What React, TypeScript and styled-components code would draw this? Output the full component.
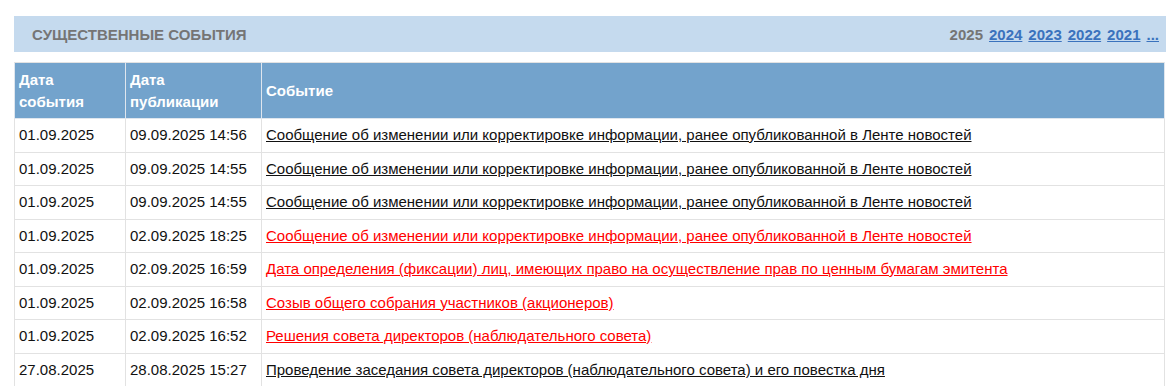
import React from 'react';
import styled, { createGlobalStyle } from 'styled-components';

const GlobalStyle = createGlobalStyle`
  body {
    margin: 0;
    background: #fff;
    font-family: "Liberation Sans", Arial, sans-serif;
  }
`;

type Row = {
  date: string;
  published: string;
  title: string;
  fresh?: boolean;
};

const rows: Row[] = [
  { date: '01.09.2025', published: '09.09.2025 14:56', title: 'Сообщение об изменении или корректировке информации, ранее опубликованной в Ленте новостей' },
  { date: '01.09.2025', published: '09.09.2025 14:55', title: 'Сообщение об изменении или корректировке информации, ранее опубликованной в Ленте новостей' },
  { date: '01.09.2025', published: '09.09.2025 14:55', title: 'Сообщение об изменении или корректировке информации, ранее опубликованной в Ленте новостей' },
  { date: '01.09.2025', published: '02.09.2025 18:25', title: 'Сообщение об изменении или корректировке информации, ранее опубликованной в Ленте новостей', fresh: true },
  { date: '01.09.2025', published: '02.09.2025 16:59', title: 'Дата определения (фиксации) лиц, имеющих право на осуществление прав по ценным бумагам эмитента', fresh: true },
  { date: '01.09.2025', published: '02.09.2025 16:58', title: 'Созыв общего собрания участников (акционеров)', fresh: true },
  { date: '01.09.2025', published: '02.09.2025 16:52', title: 'Решения совета директоров (наблюдательного совета)', fresh: true },
  { date: '27.08.2025', published: '28.08.2025 15:27', title: 'Проведение заседания совета директоров (наблюдательного совета) и его повестка дня' },
];

const years = ['2024', '2023', '2022', '2021'];

const App: React.FC = () => {
  return (
    <>
      <GlobalStyle />
      <Page>
        <TitleBar>
          <Title>Существенные события</Title>
          <Years>
            <CurrentYear>2025</CurrentYear>
            {years.map((y) => (
              <YearLink href="#" key={y}>{y}</YearLink>
            ))}
            <YearLink href="#">...</YearLink>
          </Years>
        </TitleBar>
        <Table>
          <colgroup>
            <col style={{ width: 111 }} />
            <col style={{ width: 136 }} />
            <col />
          </colgroup>
          <thead>
            <tr>
              <Th>Дата<br />события</Th>
              <Th>Дата<br />публикации</Th>
              <Th>Событие</Th>
            </tr>
          </thead>
          <tbody>
            {rows.map((r, i) => (
              <tr key={i}>
                <Td>{r.date}</Td>
                <Td>{r.published}</Td>
                <Td>
                  <EventLink href="#" $fresh={r.fresh}>{r.title}</EventLink>
                </Td>
              </tr>
            ))}
          </tbody>
        </Table>
      </Page>
    </>
  );
};

export default App;

const Page = styled.div`
  padding: 16px 3px 0 14px;
  display: flex;
  flex-direction: column;
  gap: 10px;
`;

const TitleBar = styled.div`
  background-color: #c5daee;
  height: 36px;
  display: flex;
  align-items: center;
  justify-content: space-between;
  padding: 0 7px 0 18px;
`;

const Title = styled.h2`
  margin: 0;
  font-size: 15px;
  font-weight: bold;
  text-transform: uppercase;
  color: #757575;
`;

const Years = styled.div`
  display: flex;
  gap: 6px;
  font-size: 15px;
  font-weight: bold;
`;

const CurrentYear = styled.span`
  color: #757575;
`;

const YearLink = styled.a`
  color: #3a72bd;
  text-decoration: underline;
`;

const Table = styled.table`
  width: 1151px;
  border-collapse: collapse;
  table-layout: fixed;
  font-size: 15px;
  border: 1px solid #e2e2e2;
`;

const Th = styled.th`
  background-color: #73a3cc;
  color: #fff;
  font-weight: bold;
  text-align: left;
  line-height: 21.5px;
  padding: 6px 4px;
  height: 55px;
  box-sizing: border-box;
  border: 1px solid #dfe6ee;
  border-top-color: #e2e2e2;
`;

const Td = styled.td`
  color: #111;
  line-height: 18.5px;
  padding: 7px 4px;
  border: 1px solid #e2e2e2;
  white-space: nowrap;
`;

const EventLink = styled.a<{ $fresh?: boolean }>`
  color: ${(p) => (p.$fresh ? '#ff0000' : '#111')};
  text-decoration: underline;
`;
